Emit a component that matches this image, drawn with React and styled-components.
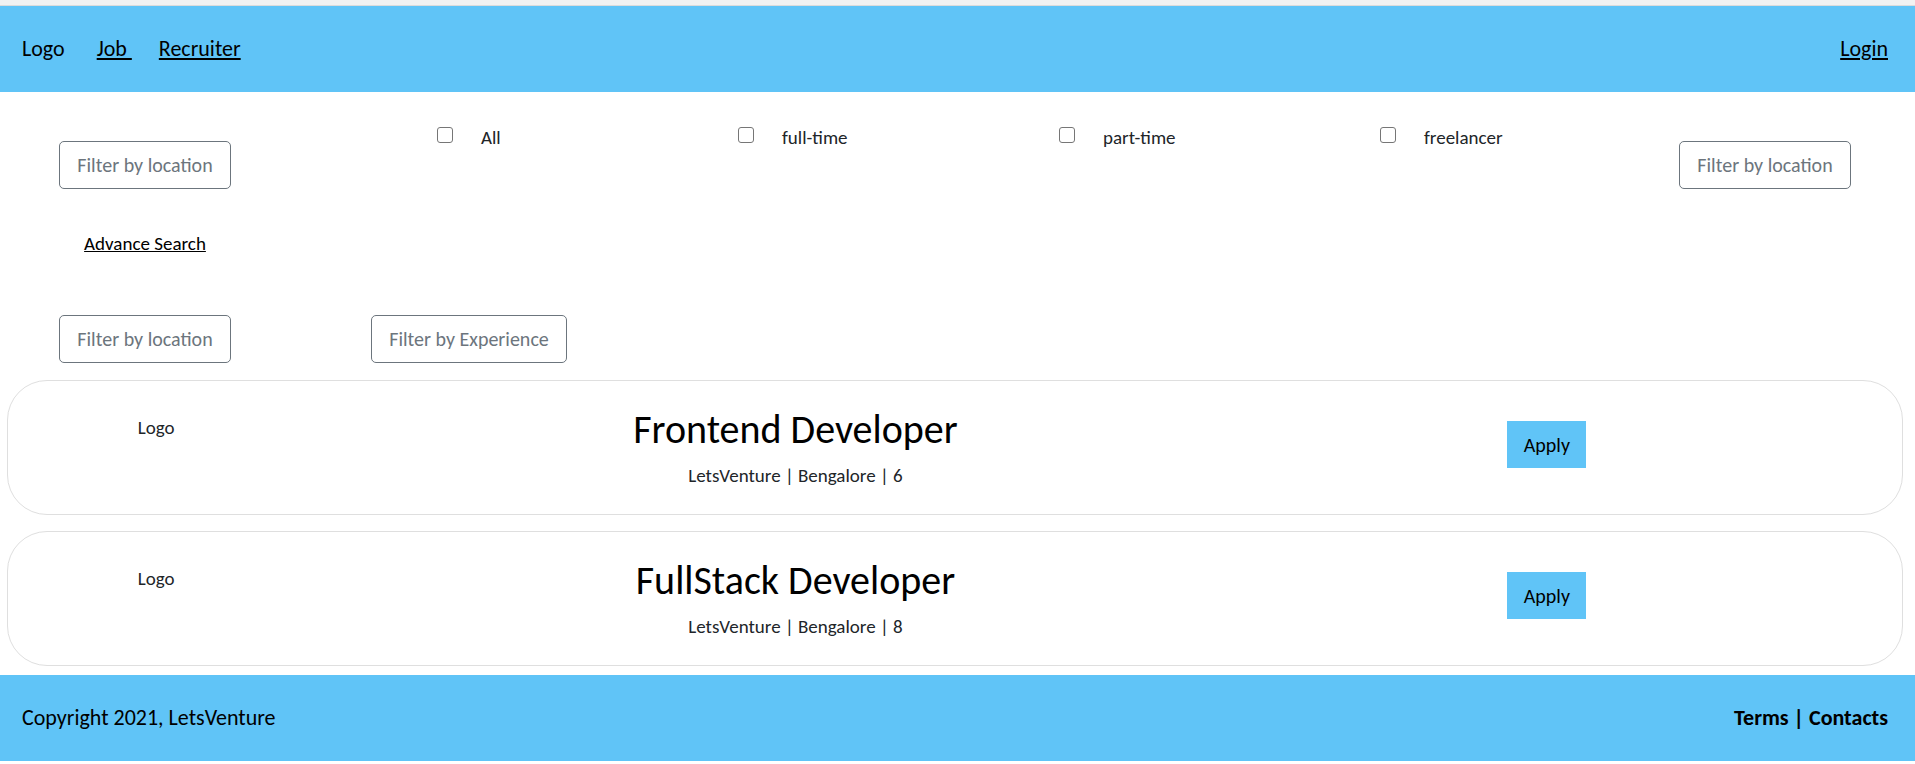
import React from "react";
import styled, { createGlobalStyle } from "styled-components";

const GlobalStyle = createGlobalStyle`
  *, *::before, *::after { box-sizing: border-box; }
  body {
    margin: 0;
    background: #fff;
    color: #212529;
    font-family: Calibri, Carlito, Lato, sans-serif;
    font-size: 19px;
    line-height: 24px;
  }
  a { color: #000; }
  p, h2 { margin: 0; }
`;

const TopEdge = styled.div`
  height: 6px;
  background: #f2f2f2;
  border-bottom: 1px solid #dcdcdc;
`;

const Bar = styled.div`
  display: flex;
  align-items: center;
  justify-content: space-between;
  min-height: 86px;
  padding: 0 27px 0 22px;
  background: #60c4f7;
  color: #000;
  font-size: 22px;
`;

const NavGroup = styled.nav`
  display: flex;
  align-items: center;
`;

const Brand = styled.span`
  margin-right: 32px;
`;

const NavLink = styled.a`
  margin-right: ${(p) => (p.$last ? 0 : 27)}px;
  white-space: pre;
  text-decoration-thickness: 2px;
  text-underline-offset: 2px;
`;

const Filters = styled.section`
  padding: 31px 64px 0 59px;
`;

const FilterRow = styled.div`
  display: grid;
  grid-template-columns: 378fr 301fr 321fr 321fr 299fr 172px;
  align-items: start;
`;

const FilterButton = styled.button`
  justify-self: start;
  height: 48px;
  width: ${(p) => (p.$wide ? 196 : 172)}px;
  margin-top: ${(p) => (p.$lowered ? 18 : 0)}px;
  padding: 0;
  border: 1px solid #6c757d;
  border-radius: 5px;
  background: transparent;
  color: #6c757d;
  font-family: inherit;
  font-size: 20px;
  white-space: nowrap;
`;

const Option = styled.label`
  display: flex;
  align-items: flex-start;
  gap: 28px;
  padding-top: 3px;
`;

const Checkbox = styled.input`
  appearance: none;
  width: 16px;
  height: 16px;
  margin: 1px 0 0;
  border: 1px solid #767676;
  border-radius: 3px;
  background: #fff;
  &:checked { background: #0d6efd; }
`;

const Advanced = styled.div`
  width: 172px;
  padding: 43px 0 59px;
  text-align: center;
`;

const MoreFilters = styled.div`
  display: flex;
  gap: 140px;
`;

const JobList = styled.main`
  display: grid;
  gap: 16px;
  padding: 17px 12px 9px 7px;
`;

const JobCard = styled.article`
  display: grid;
  grid-template-columns: 296fr 982fr 520fr;
  align-items: start;
  min-height: 135px;
  padding: 24px 95px 24px 0;
  border: 1px solid #dfdfdf;
  border-radius: 40px;
  text-align: center;
`;

const JobLogo = styled.div`
  padding-top: 11px;
`;

const JobTitle = styled.h2`
  margin-bottom: 9px;
  color: #000;
  font-size: 40px;
  font-weight: 400;
  line-height: 50px;
`;

const ApplyButton = styled.button`
  justify-self: center;
  width: 79px;
  height: 47px;
  margin-top: 16px;
  padding: 0;
  border: 0;
  background: #60c4f7;
  color: #000;
  font-family: inherit;
  font-size: 20px;
`;

const jobTypes = ["All", "full-time", "part-time", "freelancer"];

const jobs = [
  { title: "Frontend Developer", details: "LetsVenture | Bengalore | 6" },
  { title: "FullStack Developer", details: "LetsVenture | Bengalore | 8" },
];

export default function App() {
  return (
    <>
      <GlobalStyle />
      <TopEdge />
      <Bar as="header">
        <NavGroup>
          <Brand>Logo</Brand>
          <NavLink href="#job">{"Job "}</NavLink>
          <NavLink href="#recruiter" $last>Recruiter</NavLink>
        </NavGroup>
        <NavLink href="#login" $last>Login</NavLink>
      </Bar>
      <Filters>
        <FilterRow>
          <FilterButton type="button" $lowered>Filter by location</FilterButton>
          {jobTypes.map((type) => (
            <Option key={type}>
              <Checkbox type="checkbox" />
              {type}
            </Option>
          ))}
          <FilterButton type="button" $lowered>Filter by location</FilterButton>
        </FilterRow>
        <Advanced>
          <a href="#advance-search">Advance Search</a>
        </Advanced>
        <MoreFilters>
          <FilterButton type="button">Filter by location</FilterButton>
          <FilterButton type="button" $wide>Filter by Experience</FilterButton>
        </MoreFilters>
      </Filters>
      <JobList>
        {jobs.map((job) => (
          <JobCard key={job.title}>
            <JobLogo>Logo</JobLogo>
            <div>
              <JobTitle>{job.title}</JobTitle>
              <p>{job.details}</p>
            </div>
            <ApplyButton type="button">Apply</ApplyButton>
          </JobCard>
        ))}
      </JobList>
      <Bar as="footer">
        <span>Copyright 2021, LetsVenture</span>
        <strong>Terms | Contacts</strong>
      </Bar>
    </>
  );
}
